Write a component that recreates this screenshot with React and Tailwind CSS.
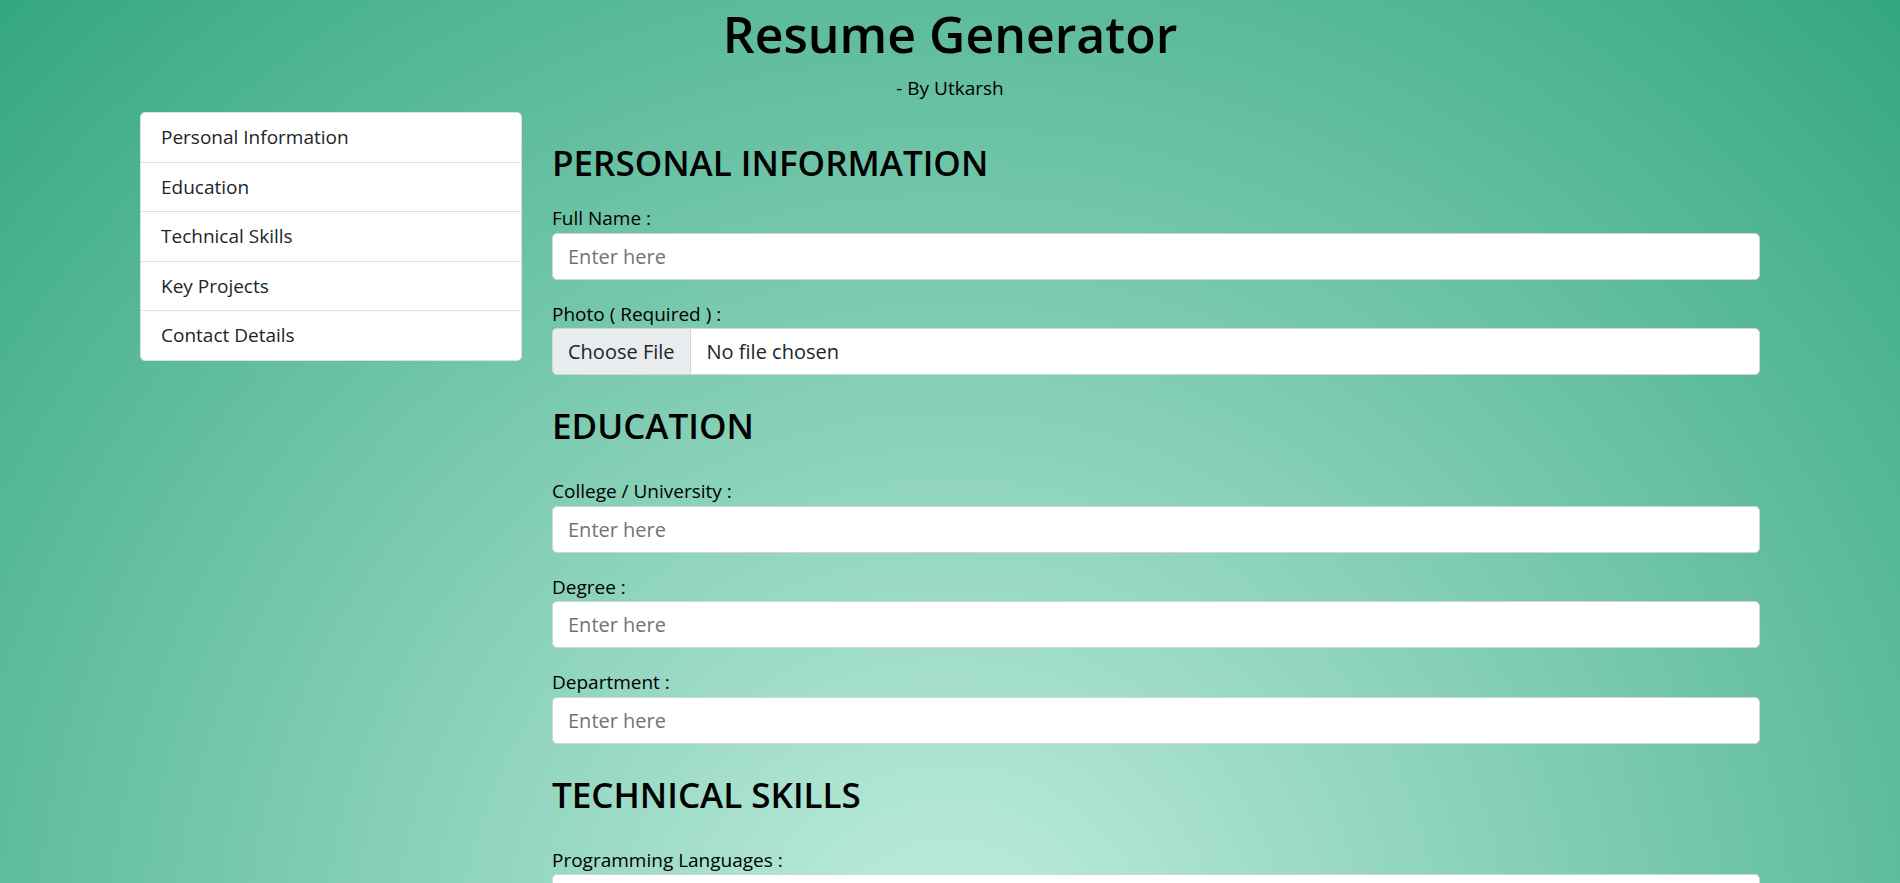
const nav = ["Personal Information", "Education", "Technical Skills", "Key Projects", "Contact Details"];

function Field({ id, label, type = "text" }) {
  return (
    <div className="flex flex-col">
      <label htmlFor={id} className="text-[19px] leading-normal">{label}</label>
      {type === "file" ? (
        <input
          id={id}
          type="file"
          className="h-[47px] w-full rounded-[5px] border border-[#ced4da] bg-white pr-4 text-xl leading-[45px] text-[#212529] file:mr-4 file:h-[45px] file:border-0 file:border-r file:border-solid file:border-[#ced4da] file:bg-[#e9ecef] file:px-[15px] file:text-[#212529]"
        />
      ) : (
        <input
          id={id}
          type="text"
          placeholder="Enter here"
          className="h-[47px] w-full rounded-[5px] border border-[#ced4da] bg-white px-[15px] text-xl text-[#212529] placeholder:text-[#6c757d]"
        />
      )}
    </div>
  );
}

function Section({ id, title, children }) {
  return (
    <section id={id}>
      <h2 className="text-[35px] leading-[42px] font-semibold">{title}</h2>
      {children}
    </section>
  );
}

export default function App() {
  return (
    <div className="h-screen overflow-hidden bg-[radial-gradient(circle_at_50%_110%,#c3eee0,#34a77f)] font-['Open_Sans',sans-serif] text-black">
      <header className="flex flex-col items-center pt-1">
        <h1 className="text-[50px] leading-[60px] font-semibold">Resume Generator</h1>
        <p className="mt-2.5 text-[19px] leading-7">- By Utkarsh</p>
      </header>
      <div className="mx-auto mt-2.5 flex max-w-[1620px] items-start gap-[30px]">
        <nav className="w-[382px] shrink-0 divide-y divide-[#dfdfdf] overflow-hidden rounded-[5px] border border-[#dfdfdf] bg-white">
          {nav.map((item) => (
            <a key={item} href={"#" + item.toLowerCase().replace(" ", "-")} className="block px-5 py-2.5 text-[19px] leading-normal text-[#212529]">
              {item}
            </a>
          ))}
        </nav>
        <main className="flex min-w-0 grow flex-col gap-[30px] pt-[30px]">
          <Section id="personal-information" title="PERSONAL INFORMATION">
            <div className="mt-5 flex flex-col gap-5">
              <Field id="name" label="Full Name :" />
              <Field id="photo" label="Photo ( Required ) :" type="file" />
            </div>
          </Section>
          <Section id="education" title="EDUCATION">
            <div className="mt-[30px] flex flex-col gap-5">
              <Field id="college" label="College / University :" />
              <Field id="degree" label="Degree :" />
              <Field id="department" label="Department :" />
            </div>
          </Section>
          <Section id="technical-skills" title="TECHNICAL SKILLS">
            <div className="mt-[30px] flex flex-col gap-5">
              <Field id="languages" label="Programming Languages :" />
            </div>
          </Section>
        </main>
      </div>
    </div>
  );
}
